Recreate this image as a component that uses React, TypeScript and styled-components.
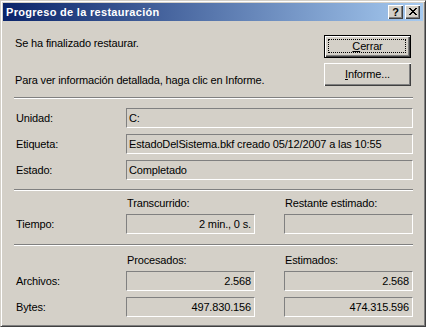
import React from "react";
import styled, { createGlobalStyle } from "styled-components";

const GlobalStyle = createGlobalStyle`
  html, body {
    margin: 0;
    padding: 0;
    background: #d4d0c8;
  }
  body {
    font-family: "Liberation Sans", Arial, sans-serif;
    font-size: 11px;
    letter-spacing: -0.15px;
    color: #000;
  }
`;

const Window = styled.div`
  width: 426px;
  height: 327px;
  box-sizing: border-box;
  background: #d4d0c8;
  border: 1px solid;
  border-color: #d4d0c8 #404040 #404040 #d4d0c8;
  box-shadow: inset 1px 1px #ffffff, inset -1px -1px #808080;
  padding: 2px;
  display: flex;
  flex-direction: column;
`;

const TitleBar = styled.div`
  height: 18px;
  flex: none;
  display: flex;
  align-items: center;
  padding: 0 3px 0 3px;
  background: linear-gradient(to right, #0a246a, #a6caf0);
`;

const Title = styled.span`
  flex: 1;
  color: #fff;
  font-weight: 700;
  font-size: 11px;
  letter-spacing: 0.3px;
  white-space: nowrap;
`;

const CaptionButtons = styled.div`
  display: flex;
  gap: 2px;
`;

const CaptionButton = styled.div`
  width: 15px;
  height: 14px;
  box-sizing: border-box;
  background: #d4d0c8;
  box-shadow: inset 1px 1px #ffffff, inset -1px -1px #404040,
    inset -2px -2px #808080;
  display: flex;
  align-items: center;
  justify-content: center;
  font-weight: 700;
  font-size: 11px;
  line-height: 14px;
  padding-bottom: 1px;
`;

const Content = styled.div`
  flex: 1;
  display: flex;
  flex-direction: column;
  padding: 0 10px 0 11px;
`;

const TopSection = styled.div`
  display: flex;
  justify-content: space-between;
  margin-top: 14px;
`;

const Messages = styled.div`
  display: flex;
  flex-direction: column;
  gap: 24px;
  padding: 2px 0 0 1px;
`;

const Line = styled.div`
  line-height: 13px;
  height: 13px;
  white-space: nowrap;
`;

const Actions = styled.div`
  display: flex;
  flex-direction: column;
  gap: 5px;
  margin-right: 2px;
`;

const Button = styled.div<{ $default?: boolean }>`
  position: relative;
  width: 87px;
  height: 23px;
  box-sizing: border-box;
  display: flex;
  align-items: center;
  justify-content: center;
  background: #d4d0c8;
  border: ${(p) => (p.$default ? "1px solid #000" : "none")};
  box-shadow: inset 1px 1px #ffffff, inset -1px -1px #404040,
    inset -2px -2px #808080;
  line-height: 13px;

  &::after {
    content: "";
    display: ${(p) => (p.$default ? "block" : "none")};
    position: absolute;
    inset: 3px 4px 4px 3px;
    border: 1px dotted #000;
  }
`;

const Mnemonic = styled.span`
  text-decoration: underline;
`;

const Separator = styled.div<{ $gap: number }>`
  height: 0;
  border-top: 1px solid #808080;
  border-bottom: 1px solid #ffffff;
  margin-top: ${(p) => p.$gap}px;
`;

const InfoList = styled.div`
  display: flex;
  flex-direction: column;
  gap: 6px;
  margin-top: 9px;
`;

const Row = styled.div<{ $gap?: number }>`
  display: grid;
  grid-template-columns: 112px 1fr;
  align-items: center;
  margin-top: ${(p) => p.$gap ?? 0}px;
`;

const Label = styled.div`
  padding-left: 2px;
  white-space: nowrap;
`;

const Pair = styled.div`
  display: grid;
  grid-template-columns: 1fr 1fr;
  column-gap: 29px;
`;

const Heading = styled.div`
  line-height: 13px;
  height: 13px;
  padding-left: 1px;
  white-space: nowrap;
`;

const Field = styled.div<{ $right?: boolean }>`
  height: 20px;
  box-sizing: border-box;
  border: 1px solid;
  border-color: #808080 #ffffff #ffffff #808080;
  padding: 0 3px 0 2px;
  line-height: 18px;
  white-space: nowrap;
  overflow: hidden;
  text-align: ${(p) => (p.$right ? "right" : "left")};
`;

const StatRows = styled.div`
  display: flex;
  flex-direction: column;
  gap: 6px;
  margin-top: 4px;
`;

function CloseGlyph() {
  const cells = [
    [0, 0], [1, 0], [6, 0], [7, 0],
    [1, 1], [2, 1], [5, 1], [6, 1],
    [2, 2], [3, 2], [4, 2], [5, 2],
    [3, 3], [4, 3],
    [2, 4], [3, 4], [4, 4], [5, 4],
    [1, 5], [2, 5], [5, 5], [6, 5],
    [0, 6], [1, 6], [6, 6], [7, 6],
  ];
  return (
    <svg width="8" height="7" viewBox="0 0 8 7" shapeRendering="crispEdges">
      {cells.map(([x, y]) => (
        <rect key={`${x}-${y}`} x={x} y={y} width="1" height="1" fill="#000" />
      ))}
    </svg>
  );
}

export default function App(): React.ReactElement {
  return (
    <>
      <GlobalStyle />
      <Window>
        <TitleBar>
          <Title>Progreso de la restauración</Title>
          <CaptionButtons>
            <CaptionButton>?</CaptionButton>
            <CaptionButton>
              <CloseGlyph />
            </CaptionButton>
          </CaptionButtons>
        </TitleBar>
        <Content>
          <TopSection>
            <Messages>
              <Line>Se ha finalizado restaurar.</Line>
              <Line>Para ver información detallada, haga clic en Informe.</Line>
            </Messages>
            <Actions>
              <Button $default>
                <span>
                  <Mnemonic>C</Mnemonic>errar
                </span>
              </Button>
              <Button>
                <span>
                  <Mnemonic>I</Mnemonic>nforme...
                </span>
              </Button>
            </Actions>
          </TopSection>

          <Separator $gap={10} />

          <InfoList>
            <Row>
              <Label>Unidad:</Label>
              <Field>C:</Field>
            </Row>
            <Row>
              <Label>Etiqueta:</Label>
              <Field>EstadoDelSistema.bkf creado 05/12/2007 a las 10:55</Field>
            </Row>
            <Row>
              <Label>Estado:</Label>
              <Field>Completado</Field>
            </Row>
          </InfoList>

          <Separator $gap={9} />

          <Row $gap={6}>
            <span />
            <Pair>
              <Heading>Transcurrido:</Heading>
              <Heading>Restante estimado:</Heading>
            </Pair>
          </Row>
          <Row $gap={4}>
            <Label>Tiempo:</Label>
            <Pair>
              <Field $right>2 min., 0 s.</Field>
              <Field $right></Field>
            </Pair>
          </Row>

          <Separator $gap={10} />

          <Row $gap={8}>
            <span />
            <Pair>
              <Heading>Procesados:</Heading>
              <Heading>Estimados:</Heading>
            </Pair>
          </Row>
          <StatRows>
            <Row>
              <Label>Archivos:</Label>
              <Pair>
                <Field $right>2.568</Field>
                <Field $right>2.568</Field>
              </Pair>
            </Row>
            <Row>
              <Label>Bytes:</Label>
              <Pair>
                <Field $right>497.830.156</Field>
                <Field $right>474.315.596</Field>
              </Pair>
            </Row>
          </StatRows>
        </Content>
      </Window>
    </>
  );
}
